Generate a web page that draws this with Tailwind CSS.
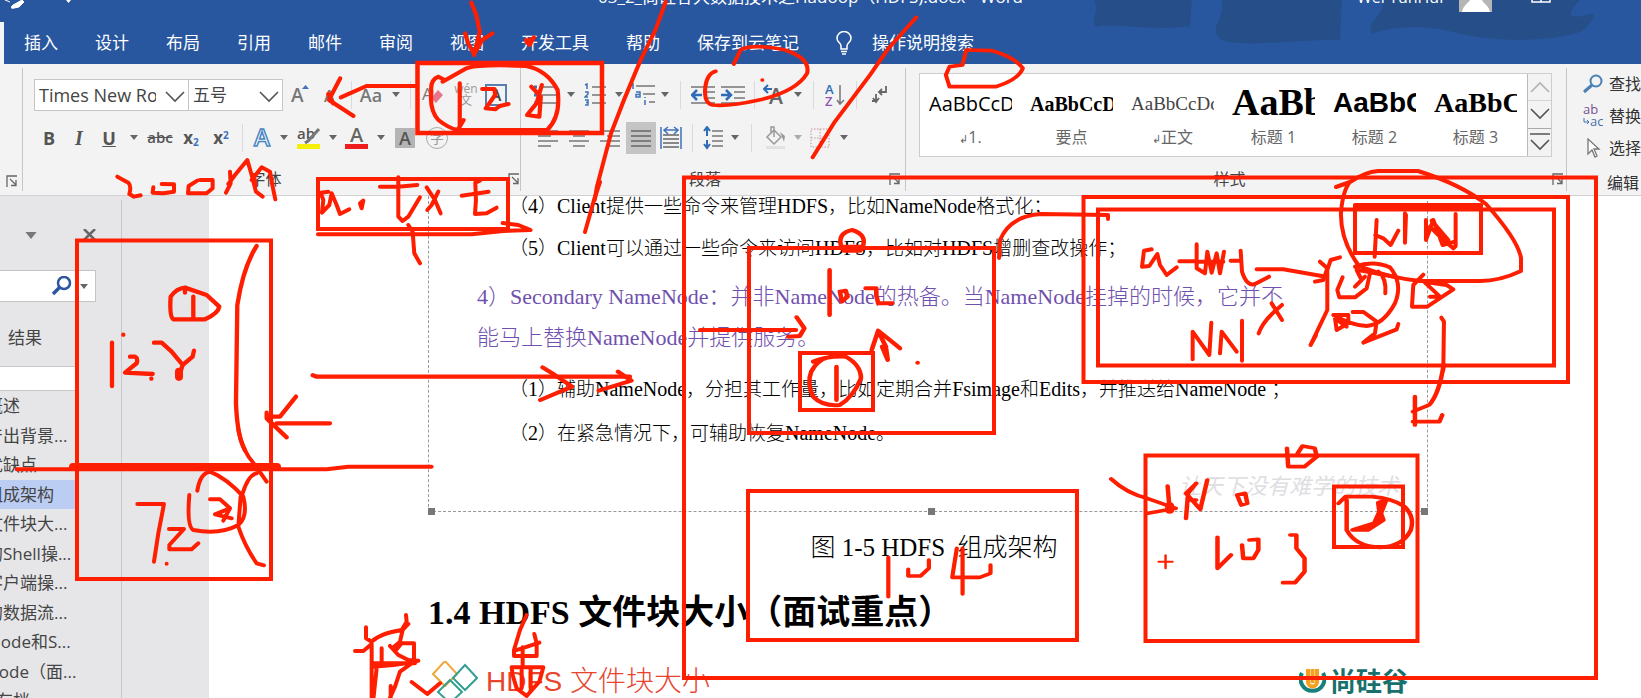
<!DOCTYPE html>
<html lang="zh-CN">
<head>
<meta charset="utf-8">
<title>Hadoop（HDFS）.docx - Word</title>
<script src="https://cdn.jsdelivr.net/npm/@tailwindcss/browser@4"></script>
</head>
<body class="relative h-screen overflow-hidden flex flex-col bg-white text-[17px] text-[#444] font-['Open_Sans','Noto_Sans_CJK_SC',sans-serif]">

<svg width="0" height="0" class="absolute">
  <defs>
    <symbol id="caret" viewBox="0 0 8 5"><path d="M0 0H8L4 5Z" fill="#666"/></symbol>
    <symbol id="chev" viewBox="0 0 20 12"><path d="M1 1L10 10L19 1" fill="none" stroke="#555" stroke-width="1.6"/></symbol>
    <symbol id="launch" viewBox="0 0 12 12"><path d="M1 12V1H11M4 4L10 10M10 5V10.500H5" fill="none" stroke="#666" stroke-width="1.300"/></symbol>
  </defs>
</svg>

<header class="relative h-16 shrink-0 bg-[#28579f] text-white">
  <svg class="absolute inset-0" width="1641" height="64" aria-hidden="true">
    <g fill="#264f8a"><path d="M1094 0C1100 12 1090 20 1096 27C1110 22 1150 32 1190 26L1192 0Z"/><path d="M1222 0C1226 20 1206 28 1222 40C1245 48 1280 40 1340 40L1342 0Z"/><path d="M1383 0C1386 14 1364 24 1372 34C1390 26 1430 24 1460 34C1500 42 1550 42 1580 32C1592 24 1598 12 1590 14C1570 20 1564 16 1580 0Z"/></g>
    <path d="M5 0L10 2M14 8C10 10 11 5 15 4L22 0L24 2L19 7Z" fill="#fff" stroke="#fff"/><path d="M66 0H71L68.500 3Z" fill="#fff"/>
    <path d="M0 22H4V64H0Z" fill="#f3f4f6"/>
    <path d="M1459 0H1492V12H1459Z" fill="#b5b5b5"/><path d="M1462 12C1463 6 1468 3 1470 0H1482C1484 4 1489 6 1490 12Z" fill="#fff"/>
    <path d="M1532 0V2H1550V0M1541 0V2" stroke="#fff" stroke-width="1.500" fill="none"/>
  </svg>
  <div class="absolute -top-[15px] left-[598px] leading-6 text-[17px] whitespace-nowrap">03_2_尚硅谷大数据技术之Hadoop（HDFS).docx - Word</div>
  <div class="absolute -top-[15px] left-[1357px] leading-6 text-base whitespace-nowrap">Wei YunHui</div>
  <nav class="relative flex items-center gap-[37px] pl-6 pt-[22px] h-16 whitespace-nowrap">
    <button>插入</button><button>设计</button><button>布局</button><button>引用</button><button>邮件</button><button>审阅</button><button>视图</button><button>开发工具</button><button>帮助</button><button>保存到云笔记</button>
    <button class="flex items-center gap-5"><svg width="16" height="24" viewBox="0 0 16 24" fill="none" stroke="#fff" stroke-width="1.500"><path d="M5 18V15C5 12 1 11 1 7.500A7 7 0 0 1 15 7.500C15 11 11 12 11 15V18ZM5 20.500H11M6 23H10"/></svg>操作说明搜索</button>
  </nav>
</header>

<section class="h-[132px] shrink-0 flex bg-[#f3f3f4] border-b border-[#d2d2d4] whitespace-nowrap">
  <div class="w-[23px] shrink-0 my-1 border-r border-[#c6c6c8] flex flex-col justify-end items-end pr-1 pb-1"><svg width="12" height="12"><use href="#launch"/></svg></div>

  <div class="w-[498px] shrink-0 my-1 pt-[10px] border-r border-[#c6c6c8] flex flex-col">
    <div class="flex items-center h-[33px] pl-[11px]">
      <label class="relative block w-[155px]"><select aria-label="字体" class="appearance-none block w-full h-8 pl-1 pr-8 bg-white border border-[#c6c6c6] text-lg leading-6 text-[#444]"><option>Times New Ro</option></select><svg class="absolute right-1 top-3" width="20" height="12"><use href="#chev"/></svg></label>
      <label class="relative block w-[94px]"><select aria-label="字号" class="appearance-none block w-full h-8 pl-1 bg-white border border-l-0 border-[#c6c6c6] text-[17px] leading-6 text-[#444]"><option>五号</option></select><svg class="absolute right-1 top-3" width="20" height="12"><use href="#chev"/></svg></label>
      <button aria-label="增大字号" class="w-9 flex justify-center"><svg width="20" height="24" viewBox="0 0 20 24"><text x="0" y="19" font-size="19" font-weight="600" font-family="Open Sans" fill="#777">A</text><path d="M11 6L14.500 2L18 6Z" fill="#3f72b8"/></svg></button>
      <button aria-label="减小字号" class="w-7 flex justify-center"><svg width="18" height="24" viewBox="0 0 18 24"><text x="0" y="19" font-size="16" font-weight="600" font-family="Open Sans" fill="#777">A</text></svg></button>
      <i class="w-px h-7 mx-1 bg-[#dadadc]"></i>
      <button class="w-[30px] text-lg font-semibold text-[#777]">Aa</button>
      <button aria-label="更多" class="w-5 flex justify-center"><svg width="8" height="5"><use href="#caret"/></svg></button>
      <i class="w-px h-7 mx-1 bg-[#dadadc]"></i>
      <button aria-label="清除格式" class="w-9 flex justify-center"><svg width="24" height="24" viewBox="0 0 24 24"><text x="1" y="17" font-size="17" font-family="Open Sans" fill="#777">A</text><path d="M10 15L17 7L22 12L15 20Z" fill="#e7768c"/></svg></button>
      <button class="w-[30px] text-[#9a9a9a] text-xs leading-3">wén<br>文</button>
      <button class="w-[30px] flex justify-center"><span class="w-[22px] h-[22px] border-2 border-[#5a7fae] text-base leading-[18px] font-semibold">A</span></button>
    </div>
    <div class="flex items-center h-[33px] mt-[10px] pl-[11px] text-[#555]">
      <button class="w-[30px] font-bold text-lg">B</button><button class="w-[30px] italic text-xl font-bold font-['Liberation_Serif',serif]">I</button><button class="w-[30px] underline font-bold text-lg">U</button>
      <button aria-label="更多" class="w-5 flex justify-center"><svg width="8" height="5"><use href="#caret"/></svg></button>
      <button class="w-8 line-through text-[15px] font-semibold">abc</button><button class="w-[30px] font-bold">x<sub class="text-[10px] text-[#3f72b8]">2</sub></button><button class="w-[30px] font-bold">x<sup class="text-[10px] text-[#3f72b8]">2</sup></button>
      <i class="w-px h-7 mx-1.5 bg-[#dadadc]"></i>
      <button aria-label="文本效果" class="w-7 flex justify-center"><svg width="22" height="24" viewBox="0 0 22 24"><text x="2" y="20" font-size="24" font-weight="600" font-family="Open Sans" fill="#fff" stroke="#4a86c0" stroke-width="1.500">A</text></svg></button>
      <button aria-label="更多" class="w-3.5 flex justify-center"><svg width="8" height="5"><use href="#caret"/></svg></button>
      <button aria-label="突出显示" class="w-9 flex justify-center"><svg width="24" height="24" viewBox="0 0 24 24"><text x="0" y="13" font-size="15" font-weight="600" font-family="Open Sans" fill="#555">ab</text><path d="M22 3L11 15L8 17" stroke="#777" stroke-width="3"/><path d="M0 18H23V23H0Z" fill="#f6ef0a"/></svg></button>
      <button aria-label="更多" class="w-3 flex justify-center"><svg width="8" height="5"><use href="#caret"/></svg></button>
      <button aria-label="字体颜色" class="w-9 flex justify-center"><svg width="24" height="24" viewBox="0 0 24 24"><text x="5" y="16" font-size="20" font-weight="600" font-family="Open Sans" fill="#666">A</text><path d="M0 18H23V23H0Z" fill="#ee1c1c"/></svg></button>
      <button aria-label="更多" class="w-3 flex justify-center"><svg width="8" height="5"><use href="#caret"/></svg></button>
      <button class="w-9 flex justify-center"><span class="w-5 h-5 bg-[#b4b4b4] leading-5 text-lg font-semibold">A</span></button>
      <button class="w-7 flex justify-center"><span class="w-[22px] h-[22px] rounded-full border border-[#aaa] text-[#999] text-sm leading-5">字</span></button>
    </div>
    <div class="mt-auto h-6 flex items-center text-base"><span class="flex-1 text-center">字体</span><svg width="12" height="12"><use href="#launch"/></svg></div>
  </div>

  <div class="w-[385px] shrink-0 my-1 pt-[10px] border-r border-[#c6c6c8] flex flex-col">
    <div class="flex items-center h-[33px] pl-[9px]">
      <button aria-label="项目符号" class="w-8 flex justify-center"><svg width="24" height="22" stroke="#777" stroke-width="1.500"><path d="M7 3H24M7 11H24M7 19H24"/><path d="M0 3H3M0 11H3M0 19H3" stroke="#3f72b8" stroke-width="3"/></svg></button>
      <button aria-label="更多" class="w-[18px] flex justify-center"><svg width="8" height="5"><use href="#caret"/></svg></button>
      <button aria-label="编号" class="w-[30px] flex justify-center"><svg width="22" height="24"><path d="M8 4H22M8 12H22M8 20H22" stroke="#777" stroke-width="1.500"/><path d="M1 2L3 1V6M1 9H4V11L1 14H4M1 17H4V22H1M2 19.500H4" fill="none" stroke="#3f72b8" stroke-width="1.500"/></svg></button>
      <button aria-label="更多" class="w-[18px] flex justify-center"><svg width="8" height="5"><use href="#caret"/></svg></button>
      <button aria-label="多级列表" class="w-[30px] flex justify-center"><svg width="26" height="24"><path d="M6 3H25M13 11H25M19 19H25" stroke="#777" stroke-width="1.500"/><path d="M1 2L3 1V6M6 9H10V14H6V11.500H10M15 17V22M15 14V15" fill="none" stroke="#3f72b8" stroke-width="1.500"/></svg></button>
      <button aria-label="更多" class="w-3.5 flex justify-center"><svg width="8" height="5"><use href="#caret"/></svg></button>
      <i class="w-px h-7 mx-2 bg-[#dadadc]"></i>
      <button aria-label="减少缩进" class="w-[27px] flex justify-center"><svg width="24" height="20"><path d="M0 2H24M13 7H24M13 13H24M0 18H24" stroke="#777" stroke-width="1.500"/><path d="M11 10H2M6 5L1 10L6 15" fill="none" stroke="#2f6cb5" stroke-width="2.500"/></svg></button>
      <button aria-label="增加缩进" class="w-[34px] flex justify-center"><svg width="24" height="20"><path d="M0 2H24M13 7H24M13 13H24M0 18H24" stroke="#777" stroke-width="1.500"/><path d="M0 10H9M5 5L10 10L5 15" fill="none" stroke="#2f6cb5" stroke-width="2.500"/></svg></button>
      <i class="w-px h-7 mx-1 bg-[#dadadc]"></i>
      <button aria-label="中文版式" class="w-8 flex justify-center"><svg width="24" height="24"><text x="6" y="21" font-size="21" font-weight="600" font-family="Open Sans" fill="#666">A</text><path d="M9 6H1M5 2L1 6L5 10" fill="none" stroke="#2f6cb5" stroke-width="2"/></svg></button>
      <button aria-label="更多" class="w-3.5 flex justify-center"><svg width="8" height="5"><use href="#caret"/></svg></button>
      <i class="w-px h-7 mx-2 bg-[#dadadc]"></i>
      <button aria-label="排序" class="w-[26px] flex justify-center"><svg width="20" height="24"><g font-size="13" font-weight="600" font-family="Open Sans"><text y="11" fill="#2f6cb5">A</text><text y="23" fill="#9255b8">Z</text></g><path d="M15 2V21M12 17L15 21L19 17" fill="none" stroke="#777" stroke-width="1.500"/></svg></button>
      <i class="w-px h-7 mx-2 bg-[#dadadc]"></i>
      <button aria-label="显示标记" class="w-7 flex justify-center"><svg width="16" height="20" fill="none" stroke="#666" stroke-width="1.800"><path d="M15 1V7H8M11 4L8 7L11 10M5 9V16H1M2 13L5 17L8 13"/></svg></button>
    </div>
    <div class="flex items-center h-[33px] mt-[10px] pl-[11px]">
      <button aria-label="左对齐" class="w-8 flex justify-center"><svg width="20" height="20" stroke="#777" stroke-width="1.500"><path d="M0 3H20M0 8H13M0 13H20M0 18H13"/></svg></button>
      <button aria-label="居中" class="w-[30px] flex justify-center"><svg width="20" height="20" stroke="#777" stroke-width="1.500"><path d="M0 3H20M4 8H16M0 13H20M4 18H16"/></svg></button>
      <button aria-label="右对齐" class="w-8 flex justify-center"><svg width="20" height="20" stroke="#777" stroke-width="1.500"><path d="M0 3H20M7 8H20M0 13H20M7 18H20"/></svg></button>
      <button aria-label="两端对齐" class="w-[30px] h-8 bg-[#c4c4c4] flex justify-center items-center"><svg width="20" height="20" stroke="#666" stroke-width="1.500"><path d="M0 3H20M0 8H20M0 13H20M0 18H20"/></svg></button>
      <button aria-label="分散对齐" class="w-[30px] flex justify-center"><svg width="22" height="24" fill="none"><path d="M3 9H19M3 13H19M3 17H19M3 21H19" stroke="#666" stroke-width="1.500"/><path d="M1 1V23M21 1V23M4 4H18M8 1L4 4L8 8M14 1L18 4L14 8" stroke="#3f72b8" stroke-width="1.500"/></svg></button>
      <i class="w-px h-7 mx-1.5 bg-[#dadadc]"></i>
      <button aria-label="行距" class="w-7 flex justify-center"><svg width="20" height="24" fill="none"><path d="M9 5H20M9 10H20M9 15H20M9 20H20" stroke="#777" stroke-width="1.500"/><path d="M4 2V10M1 5L4 1L7 5M4 14V22M1 18L4 22L7 18" stroke="#2f6cb5" stroke-width="2"/></svg></button>
      <button aria-label="更多" class="w-4 flex justify-center"><svg width="8" height="5"><use href="#caret"/></svg></button>
      <i class="w-px h-7 mx-2 bg-[#dadadc]"></i>
      <button aria-label="底纹" class="w-8 flex justify-center"><svg width="22" height="24" fill="none"><path d="M9 4L16 11L9 18L2 11ZM9 11V1H6V8" stroke="#999" stroke-width="1.500"/><path d="M15 6L20 10L19 16Z" fill="#999"/><path d="M1 20H20V23H1Z" fill="#e2e2e2"/></svg></button>
      <button aria-label="更多" class="w-3 flex justify-center opacity-50"><svg width="8" height="5"><use href="#caret"/></svg></button>
      <button aria-label="边框" class="w-8 flex justify-center"><svg width="20" height="20" fill="none" stroke="#c4919a" stroke-dasharray="1.500 1.500"><path d="M1 1H19V19H1ZM10 1V19M1 10H19"/></svg></button>
      <button aria-label="更多" class="w-4 flex justify-center"><svg width="8" height="5"><use href="#caret"/></svg></button>
    </div>
    <div class="mt-auto h-6 flex items-center text-base pr-1"><span class="flex-1 text-center">段落</span><svg width="12" height="12"><use href="#launch"/></svg></div>
  </div>

  <div class="flex-1 min-w-0 my-1 pt-[5px] pl-[13px] pr-[14px] border-r border-[#c6c6c8] flex flex-col">
    <div class="flex h-[84px] border border-[#cdcdd0] bg-white text-black">
      <div class="flex-1 grid grid-cols-6 pl-[9px] gap-[18px] pr-2.5 text-center">
        <button class="min-w-0 flex flex-col"><span class="h-[51px] w-full overflow-hidden flex items-end text-xl leading-[42px] font-['Open_Sans']">AaBbCcDd</span><span class="w-full leading-6 text-base text-[#666]"><small class="text-[11px]">↲</small>1.</span></button>
        <button class="min-w-0 flex flex-col"><span class="h-[51px] w-full overflow-hidden flex items-end text-xl leading-[42px] font-bold font-['Liberation_Serif']">AaBbCcD</span><span class="w-full leading-6 text-base text-[#666]">要点</span></button>
        <button class="min-w-0 flex flex-col"><span class="h-[51px] w-full overflow-hidden flex items-end text-[19px] leading-[42px] text-[#444] font-['Liberation_Serif']">AaBbCcDd</span><span class="w-full leading-6 text-base text-[#666]"><small class="text-[11px]">↲</small>正文</span></button>
        <button class="min-w-0 flex flex-col"><span class="h-[51px] w-full overflow-hidden flex items-end text-[38px] leading-[46px] font-bold font-['Liberation_Serif']">AaBb</span><span class="w-full leading-6 text-base text-[#666]">标题 1</span></button>
        <button class="min-w-0 flex flex-col"><span class="h-[51px] w-full overflow-hidden flex items-end text-[28px] leading-[44px] font-bold font-['Liberation_Sans']">AaBbC</span><span class="w-full leading-6 text-base text-[#666]">标题 2</span></button>
        <button class="min-w-0 flex flex-col"><span class="h-[51px] w-full overflow-hidden flex items-end text-[28px] leading-[44px] font-bold font-['Liberation_Serif']">AaBbC</span><span class="w-full leading-6 text-base text-[#666]">标题 3</span></button>
      </div>
      <div class="w-6 grid grid-rows-3 border-l border-[#bbb] divide-y divide-[#aaa] bg-[#f3f3f4]">
        <button aria-label="上移" class="flex items-center justify-center opacity-40"><svg class="rotate-180" width="20" height="12"><use href="#chev"/></svg></button>
        <button aria-label="下移" class="flex items-center justify-center"><svg width="20" height="12"><use href="#chev"/></svg></button>
        <button aria-label="其他样式" class="flex items-center justify-center"><svg width="20" height="20" viewBox="0 0 20 20" fill="none" stroke="#555" stroke-width="1.600"><path d="M0 2H20M1 8L10 17L19 8"/></svg></button>
      </div>
    </div>
    <div class="mt-auto h-6 flex items-center text-base"><span class="flex-1 text-center pr-3">样式</span><svg width="12" height="12" class="-mr-3"><use href="#launch"/></svg></div>
  </div>

  <div class="w-[74px] shrink-0 pl-4 pt-1 flex flex-col overflow-hidden text-base text-[#333]">
    <button class="flex items-center gap-1.5 h-8 w-24 shrink-0"><svg class="shrink-0" width="20" height="20" fill="none" stroke="#4a80b4" stroke-width="2"><circle cx="13" cy="7" r="5.500"/><path d="M9 11L1 18" stroke-width="3"/></svg>查找</button>
    <button class="flex items-center gap-1.5 h-8 w-24 shrink-0"><svg class="shrink-0" width="20" height="24" font-size="13" font-family="Open Sans"><text x="0" y="10" fill="#765293">ab</text><text x="7" y="22" fill="#4a6fa8">ac</text><path d="M1 14V18H6M4 16L6 18L4 20" fill="none" stroke="#3f72b8"/></svg>替换</button>
    <button class="flex items-center gap-1.5 h-8 w-24 shrink-0"><svg class="shrink-0" width="20" height="20" fill="#fff" stroke="#777" stroke-width="1.300"><path d="M5 1V16L9 12L12 19L14 18L11 11H16Z"/></svg>选择</button>
    <span class="mt-auto pl-6 leading-6">编辑</span>
  </div>
</section>

<main class="flex-1 min-h-0 flex">
  <aside class="w-[209px] shrink-0 flex bg-[#e6e6e9] overflow-hidden whitespace-nowrap">
    <div class="w-[122px] shrink-0 mt-1 border-r border-[#c8c8cb] pt-7">
      <div class="flex items-center h-3.5 pl-[25px] gap-[46px]"><svg width="12" height="7" viewBox="0 0 8 5"><path d="M0 0H8L4 5Z" fill="#777"/></svg><button aria-label="关闭"><svg width="13" height="12" stroke="#666" stroke-width="2.500"><path d="M1 0L12 11M12 0L1 11"/></svg></button></div>
      <div class="mt-7 w-24 h-8 bg-white border border-l-0 border-[#c4c4c6] flex items-center">
        <input aria-label="搜索文档" class="w-[52px] h-7 bg-transparent outline-none"><button aria-label="搜索"><svg width="20" height="20" fill="none" stroke="#2d56a0" stroke-width="2.500"><circle cx="12" cy="7" r="6"/><path d="M8 11L1 18" stroke-width="3.500"/></svg></button><svg class="ml-2" width="8" height="5"><use href="#caret"/></svg>
      </div>
      <div class="h-[65px] w-[76px] pl-2 pt-5 leading-8 border-b border-[#c8c8cb]">结果</div>
      <div class="h-6 w-[76px] bg-white border-b border-[#c8c8cb]"></div>
      <ul class="h-[325px] w-[76px] grid grid-rows-11 items-center overflow-hidden *:h-full *:flex *:items-center *:pr-2">
        <li><span class="-ml-3.5">概述</span></li><li><span class="-ml-3.5">产出背景...</span></li><li><span class="-ml-3.5">优缺点</span></li><li class="bg-[#bccdf3]"><span class="-ml-3.5">组成架构</span></li><li><span class="-ml-3.5">文件块大...</span></li><li><span class="-ml-3.5">的Shell操...</span></li><li><span class="-ml-3.5">客户端操...</span></li><li><span class="-ml-3.5">的数据流...</span></li><li><span class="-ml-3">Node和S...</span></li><li><span class="-ml-3.5">Node（面...</span></li><li><span class="-ml-1">存档</span></li>
      </ul>
    </div>
  </aside>

  <article class="flex-1 min-w-0 pl-[219px] text-black whitespace-nowrap font-['Liberation_Serif','Noto_Sans_CJK_SC',serif]">
    <div class="relative w-[1000px] h-[316px] border border-t-0 border-dashed border-[#999] font-light text-[19px]">
      <p class="pl-20 leading-[22px]">（<span class="text-xl leading-none">4</span>）<span class="text-xl leading-none">Client</span>提供一些命令来管理<span class="text-xl leading-none">HDFS</span>，比如<span class="text-xl leading-none">NameNode</span>格式化；</p>
      <p class="pl-20 leading-[62px]">（<span class="text-xl leading-none">5</span>）<span class="text-xl leading-none">Client</span>可以通过一些命令来访问<span class="text-xl leading-none">HDFS</span>，比如对<span class="text-xl leading-none">HDFS</span>增删查改操作；</p>
      <p class="pl-12 -mt-1 text-[22px] leading-[41px] text-[#7050ae]">4）Secondary NameNode：并非NameNode的热备。当NameNode挂掉的时候，它并不<br>能马上替换NameNode并提供服务。</p>
      <p class="pl-20 pt-2.5 leading-[44px]">（<span class="text-xl leading-none">1</span>）辅助<span class="text-xl leading-none">NameNode</span>，分担其工作量，比如定期合并<span class="text-xl leading-none">Fsimage</span>和<span class="text-xl leading-none">Edits</span>，并推送给<span class="text-xl leading-none">NameNode </span>；</p>
      <p class="pl-20 leading-[44px]">（<span class="text-xl leading-none">2</span>）在紧急情况下，可辅助恢复<span class="text-xl leading-none">NameNode</span>。</p>
      <p class="pr-7 text-right text-[22px] leading-[56px] italic font-normal text-[#dedee2] font-['Noto_Sans_CJK_SC']">让天下没有难学的技术</p>
      <i class="absolute -left-px -bottom-1 size-[7px] bg-[#777]"></i><i class="absolute left-1/2 -bottom-1 size-[7px] bg-[#777]"></i><i class="absolute -right-px -bottom-1 size-[7px] bg-[#777]"></i>
    </div>
    <p class="w-[1000px] pl-3 mt-3.5 text-center text-[25px] leading-[44px] font-light">图 1-5 HDFS&nbsp; 组成架构</p>
    <h1 class="mt-[21px] text-[34px] leading-[44px] font-bold">1.4 HDFS 文件块大小（面试重点）</h1>
    <div class="mt-[30px] h-[34px] w-[1000px] pl-1 pr-5 flex items-center justify-between border-b border-[#dcebf7] font-['Liberation_Sans','Noto_Sans_CJK_SC',sans-serif]">
      <h2 class="flex items-center gap-2 text-[28px] leading-8 font-light text-[#e8442e]"><svg width="46" height="42" viewBox="0 0 46 42" fill="none" stroke-width="2"><path d="M13 0L25 13L13 25L1 13Z" stroke="#f0a83c"/><path d="M33 4L45 17L33 29L21 17ZM18 19L30 31L18 42L6 31Z" stroke="#35a091"/></svg>HDFS 文件块大小</h2>
      <div class="flex items-center gap-1 text-[26px] leading-8 font-bold text-[#17706b]"><svg width="27" height="28" fill="none"><path d="M3 5A12 12 0 1 0 24 5" stroke="#17807a" stroke-width="4"/><path d="M9 1V14A4.500 4.500 0 0 0 18 14V1M13.500 1V15" stroke="#f5a01e" stroke-width="4"/></svg>尚硅谷</div>
    </div>
  </article>
</main>

<!-- Red pen layer: boxes and handwriting over the document -->
<svg class="absolute left-0 top-0 pointer-events-none" width="1641" height="698" viewBox="0 0 1641 698" fill="none" stroke="#ff1e00" stroke-width="4" stroke-linecap="round" stroke-linejoin="round" aria-hidden="true">
  <g stroke-linejoin="miter">
    <path d="M417.500 63H602V133H417.500Z" stroke-width="4.500"/><path d="M318 179H508V229H318Z"/><path d="M684 177.500H1596V678H684Z"/>
    <path d="M77 240.500H271V579H77Z"/><path d="M749 248H994V433H749ZM800 353H873V410H800Z"/>
    <path d="M1083.500 197H1568V382H1083.500ZM1098 209.500H1554V365.500H1098ZM1355 206H1481V253H1355ZM1355 205H1481"/>
    <path d="M748 491H1077V640H748ZM1145.500 455.500H1417.500V641H1145.500ZM1334 486.500H1403V547H1334Z"/>
    <path d="M73 467H277" stroke-width="8"/>
  </g>
  <path d="M600 182L594 200L585 232M999 258L1000 240Q1010 216 1041 214L1108 215V219"/>
  <path d="M1336 187L1350 182Q1365 172 1378 171H1418Q1460 184 1486 204Q1518 240 1521 258V271Q1500 281 1480 281H1420Q1390 278 1359 266Q1340 240 1341 212Q1343 190 1350 182"/>
  <g transform="scale(.3507 .3333)" stroke-width="12">
    <path d="M1344 8L1358 45L1368 95L1352 165M1326 100L1335 130L1352 162L1375 120L1404 100M1500 120L1510 135L1522 112M1502 128L1512 118"/>
    <path d="M1190 258H1045L972 292M970 235L938 300L1008 348M936 282L950 310"/>
    <path d="M1262 245L1330 205Q1370 192 1500 198Q1560 210 1590 270Q1600 350 1560 390H1310M1268 240L1250 230Q1226 240 1230 275Q1224 330 1250 360Q1280 385 1305 390L1322 360M1311 250V388M1375 267H1410L1412 285L1385 325L1412 328L1425 318L1450 312M1515 260L1542 290L1538 350L1503 345L1530 310L1545 255"/>
  </g>
  <g transform="translate(110 150) scale(.3333)" stroke-width="12">
    <path d="M22 80L55 98Q65 108 58 132L72 140L92 136M130 112L128 128L160 130L192 125V103L155 102M262 92L236 108L234 130H290L308 115V90H270M360 65L362 100L348 128M355 102L375 75L412 30L425 75L438 125L458 140M425 90L455 52L480 65L488 110L496 148M432 75L436 105"/>
    <path d="M655 125L632 128L640 150L636 188L658 165L665 130L680 165L690 192L718 178M810 110H865L922 105M865 82V200L878 213L895 200L930 142M950 112L975 150L992 190M985 125L965 165L952 180M1055 137L1085 133L1136 125M1110 92L1096 98L1098 150L1095 192L1130 190L1160 173"/>
    <path d="M750 160L760 152L755 175Z" fill="#ff1e00"/>
    <path d="M624 253H1085L1180 243L1262 240L1225 225L1178 219M895 225L908 245L913 310L930 340"/>
  </g>
  <g transform="translate(500 0) scale(.37 .3333)" stroke-width="11">
    <path d="M448 5L420 90L380 180L335 300L300 400L262 560L256 600M1125 52L1050 145L1000 225L905 365L845 472"/>
    <path d="M632 192L650 150Q680 130 770 150Q840 175 830 220Q800 275 700 300Q620 320 575 315Q550 310 555 260Q560 220 583 214M709 240V240"/>
    <path d="M1215 260H1340Q1400 240 1413 205Q1390 170 1330 152L1260 150L1250 195L1215 200L1205 225Z"/>
  </g>
  <g transform="translate(0 190) scale(.3333)" stroke-width="13">
    <path d="M512 320Q530 295 555 293L620 315L658 350Q655 370 615 388H520Q508 380 512 320M555 295V308M580 320V385M336 458V588M390 500H405Q415 505 410 520L375 548L458 552M370 434V434M454 566V566M462 458H485L515 485L548 525L535 565M582 482L578 500L548 525"/>
    <path d="M537 545V560" stroke-width="24"/>
    <path d="M770 168Q730 230 712 345L708 640Q712 740 735 780M990 700H830M888 620L840 680L800 680M800 668V685L860 742M938 556L950 560H1890"/>
  </g>
  <g transform="translate(0 430) scale(.3333)" stroke-width="12">
    <path d="M50 118H980L1045 110H1295M412 222H492L475 310L462 395M500 401V401M507 297H552L508 345V358H575L595 340"/>
    <path d="M592 182Q600 130 630 125Q680 145 730 200Q745 260 715 285Q660 315 580 300Q560 290 568 195M630 208H660L690 235L645 253L695 265M690 235L670 272M715 0Q725 60 765 105L800 155M728 190Q745 135 770 130M722 200L715 290Q735 350 770 400L792 406"/>
  </g>
  <g transform="translate(340 600) scale(.3333)" stroke-width="12">
    <path d="M78 82V115L95 125Q120 100 185 90L200 65L198 45M205 72L188 90L180 125L162 140M45 153H70L95 132V298M98 200L160 195L228 185M98 190H225M125 145V190M150 138L175 165L205 180L235 182M170 148L185 130H222V180M110 205L100 298M215 190L180 215L165 260L148 298M152 258V298M215 246L262 282L300 250"/>
    <path d="M560 45L540 90L522 150V168H590V130L583 102M525 152L598 128M548 142V195M515 202H610L598 245L560 288L530 265L518 225ZM545 210V265M572 205V262"/>
  </g>
  <g transform="translate(440 180) scale(.3827 .3333)" stroke-width="12">
    <path d="M268 562L300 585L345 620L262 660M465 575L500 602L415 632M1050 205Q1035 160 1077 150Q1120 165 1102 208ZM1052 200H1102M1055 212H1098"/>
    <path d="M1018 270V405M1045 335L1050 365L1065 350L1060 332ZM1112 325H1140V345L1145 370H1182M680 450H930M932 412L952 445L940 468L910 470"/>
    <path d="M975 545Q1010 528 1060 530Q1100 555 1100 595Q1080 650 1045 675Q1000 680 975 650Q958 610 970 575Q985 540 1020 530M1036 560V660M1128 510L1145 452L1202 505M1150 465L1165 500L1170 540L1155 500"/><path d="M1248 548V548"/>
  </g>
  <g transform="translate(1120 190) scale(.3333)" stroke-width="12">
    <path d="M95 178L72 182L66 230L88 228L112 192L120 225L140 255L170 232M178 214H225M230 163V235L255 250L262 185L275 248L290 190L300 250L312 185M238 215H310M332 212H360M362 182L366 245Q380 290 405 282L447 260M410 238H490L618 260M600 215L622 235L610 270L585 275"/>
    <path d="M660 202L632 210L622 240V360L572 465L588 435M218 508V425L268 495L274 398M300 490L305 425L350 485M366 392V512M416 430Q430 390 486 345M455 340L486 390"/>
    <path d="M705 230Q760 210 810 232Q850 280 825 340Q790 405 740 408Q700 408 640 375M668 262L652 300L658 322H705L740 295L750 250M710 240L725 270L705 290L735 260M775 245Q800 265 796 310M640 375H685V400L650 420L645 385L680 410M698 366H730L770 395L765 430L730 458L830 418L835 402M715 240L830 262"/>
    <path d="M770 90L764 200M766 135L790 145L812 165L835 122M855 70V158L858 75M918 90V150L940 90L968 165L1005 155M930 110L970 150L1000 175L1007 168V72M935 92L985 150M910 254L880 285L876 350H922L1000 298L980 285L912 275L960 320H930"/>
    <path d="M964 383L972 395L970 540"/>
  </g>
  <g transform="translate(1000 180) scale(.4088 .3333)" stroke-width="11">
    <path d="M1085 555Q1075 640 1050 675L1010 695M1015 650V735M1010 725H1075L1082 705"/>
  </g>
  <g transform="translate(400 440) scale(.3827 .3333)" stroke-width="11">
    <path d="M1276 352V470M1328 388V408H1360L1382 385V360M1455 325L1443 412H1515L1543 400V375M1470 325V462"/>
  </g>
  <g transform="translate(1000 430) scale(.4088 .3333)" stroke-width="11">
    <path d="M702 55L705 110H745L775 80L770 55L740 48L728 70M272 147Q310 190 360 205L430 235L362 250M410 168L415 240M455 265L460 190L480 160L455 190L490 238L507 150M460 210L480 210M580 195L590 225L605 220L600 190Z"/>
    <path d="M532 322V415L565 375M592 345L595 385H620L632 360V328L610 330M710 315H725V355L745 385V425L722 458H692M828 220L845 200H910Q960 205 990 230Q1015 260 1005 300Q985 350 930 352Q870 350 848 300V210"/>
    <path d="M388 395H422M405 376V415" stroke-width="6"/>
    <path d="M925 218L945 210L932 250L938 270L900 300H862L915 280L928 245Z" fill="#ff1e00"/>
    <path d="M415 228V240" stroke-width="22"/>
  </g>
</svg>
</body>
</html>
